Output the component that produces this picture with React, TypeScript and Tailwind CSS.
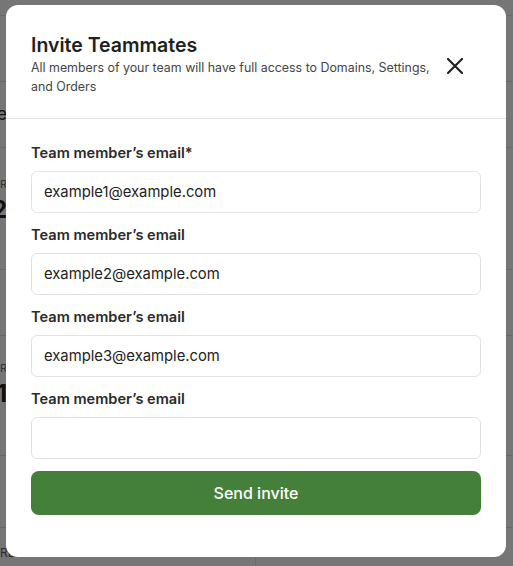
import React from "react";

const font = { fontFamily: "Inter, 'Noto Sans', sans-serif" };

function Field({ label, value }: { label: string; value: string }) {
  return (
    <div className="flex flex-col">
      <label className="h-5 text-[14.6px] leading-5 font-semibold text-[#2b2b2b] mb-2">{label}</label>
      <div className="h-[42px] rounded-md border border-[#e2e2e4] bg-white px-3 flex items-center text-[14.8px] text-[#222]">
        {value}
      </div>
    </div>
  );
}

export default function App() {
  return (
    <div className="relative w-[513px] h-[566px] overflow-hidden bg-[#ececee]" style={font}>
      {/* background page */}
      <div className="flex flex-col">
        <div className="h-[16px] border-b border-[#d4d4d8]" />
        <div className="h-[66px] border-b border-[#d4d4d8]" />
        <div className="h-[66px] border-b border-[#d4d4d8] flex">
          <div className="w-[7px] flex justify-end items-center">
            <span className="whitespace-nowrap text-[17px] text-[#222]">Save</span>
          </div>
        </div>
        <div className="h-[122px] border-b border-[#d4d4d8] flex">
          <div className="w-[7px] flex flex-col items-end pt-[28px]">
            <span className="whitespace-nowrap text-[11px] text-[#666] leading-4">NUMBER</span>
            <span className="whitespace-nowrap text-[24px] font-bold text-[#222] leading-7 mt-1">32</span>
          </div>
        </div>
        <div className="h-[66px] border-b border-[#d4d4d8]" />
        <div className="h-[120px] border-b border-[#d4d4d8] flex">
          <div className="w-[7px] flex flex-col items-end pt-[24px]">
            <span className="whitespace-nowrap text-[11px] text-[#666] leading-4">NUMBER</span>
            <span className="whitespace-nowrap text-[24px] font-bold text-[#222] leading-7 mt-1">21</span>
          </div>
        </div>
        <div className="h-[72px] border-b border-[#d4d4d8]" />
        <div className="flex h-[40px]">
          <div className="w-[256px] border-r border-[#d4d4d8] pt-[16px] text-[12px] text-[#555] whitespace-nowrap">
            REFERRING DOMAINS
          </div>
          <div className="flex-1 pt-[16px] text-[12px] text-[#555] flex justify-center pr-[20px] whitespace-nowrap">
            ORGANIC KEYWORDS
          </div>
        </div>
      </div>

      {/* overlay */}
      <div className="absolute inset-0 bg-black/50" />

      {/* modal */}
      <div className="absolute left-[6px] top-[5px] w-[500px] h-[552px] bg-white rounded-[12px] flex flex-col">
        <div className="flex items-center justify-between pl-[25px] pr-[43px] pt-[28px] pb-[22px] border-b border-[#e4e4e6]">
          <div className="flex flex-col w-[405px]">
            <h2 className="text-[19.5px] leading-6 font-semibold text-[#1f1f1f]">Invite Teammates</h2>
            <p className="text-[12.4px] leading-[19px] text-[#444] mt-[1px]">
              All members of your team will have full access to Domains, Settings,
              <br />
              and Orders
            </p>
          </div>
          <svg width="16" height="16" viewBox="0 0 16 16" className="mt-[3px]">
            <path d="M1 1 L15 15 M15 1 L1 15" stroke="#222" strokeWidth="2.2" strokeLinecap="round" />
          </svg>
        </div>
        <div className="flex flex-col gap-3 px-[25px] pt-[24px]">
          <Field label="Team member’s email*" value="example1@example.com" />
          <Field label="Team member’s email" value="example2@example.com" />
          <Field label="Team member’s email" value="example3@example.com" />
          <Field label="Team member’s email" value="" />
          <button className="h-[44px] rounded-lg bg-[#45803b] text-white text-[16px] font-medium">
            Send invite
          </button>
        </div>
      </div>
    </div>
  );
}
